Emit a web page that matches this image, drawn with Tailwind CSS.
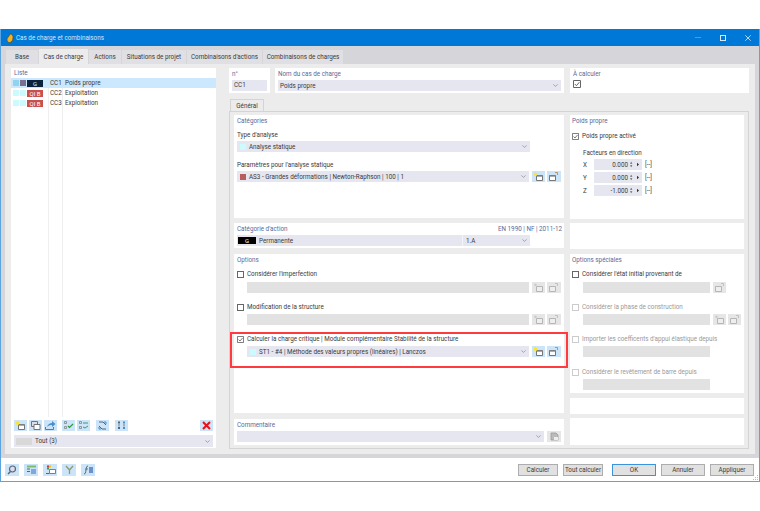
<!DOCTYPE html>
<html lang="fr">
<head>
    <meta charset="UTF-8">
    <title>Cas de charge et combinaisons</title>
    <script src="https://cdn.jsdelivr.net/npm/@tailwindcss/browser@4"></script>
</head>
<body class="bg-white pt-[29px] h-[511px] w-[760px] overflow-hidden font-['Roboto',sans-serif] text-[6.3px] leading-[10px] text-[#3a3a3a] whitespace-nowrap">
    <svg class="hidden">
        <symbol id="i-new" viewBox="0 0 13 11">
            <path d="M4.500 4.500h6v5h-6z" fill="#fff" stroke="#666" stroke-width=".9"/>
            <path d="M4.500 4.500h6v1.200h-6z" fill="#888"/>
            <path d="M3.500 0.300l.8 1.600 1.700.2-1.300 1.100.4 1.700-1.600-.9-1.600.9.400-1.700-1.300-1.100 1.700-.2z" fill="#f7e52e"/>
        </symbol>
        <symbol id="i-edit" viewBox="0 0 13 11">
            <path d="M2.500 4.500h6v5h-6z" fill="#fff" stroke="#666" stroke-width=".9"/>
            <path d="M2.500 4.500h6v1.200h-6z" fill="#888"/>
            <path d="M8 1.500h2.500V4" fill="none" stroke="#c09060" stroke-width="1"/>
        </symbol>
        <symbol id="i-new-off" viewBox="0 0 13 11">
            <path d="M4.500 4.500h6v5h-6z" fill="#eee" stroke="#b0b0b0" stroke-width=".9"/>
            <path d="M3.500 1l.5 1.200 1.300.1-1 .9.300 1.300-1.100-.7-1.100.7.300-1.300-1-.9 1.300-.1z" fill="#c8c8c8"/>
        </symbol>
        <symbol id="i-edit-off" viewBox="0 0 13 11">
            <path d="M2.500 4.500h6v5h-6z" fill="#eee" stroke="#b0b0b0" stroke-width=".9"/>
            <path d="M8 1.500h2.500V4" fill="none" stroke="#c0c0c0" stroke-width="1"/>
        </symbol>
        <symbol id="i-chev" viewBox="0 0 7 4">
            <path d="M.5.500l3 2.700 3-2.700" fill="none" stroke="#777" stroke-width=".8"/>
        </symbol>
        <symbol id="i-check" viewBox="0 0 8 8">
            <path d="M.5.500h7v7h-7z" fill="#fff" stroke="#666" stroke-width="1"/>
            <path d="M1.800 4l1.600 1.700 3-3.500" fill="none" stroke="#555" stroke-width=".9"/>
        </symbol>
        <symbol id="i-spin" viewBox="0 0 10 7">
            <path d="M0 2.800l1.200-2 1.200 2zM0 4.200l1.200 2 1.200-2z" fill="#666"/>
            <path d="M7 1.800l2 1.700-2 1.700z" fill="#333"/>
        </symbol>
    </svg>

    <div class="w-[760px] h-[453px] flex flex-col border-x border-b border-[#5aa5e0] bg-white">
        <!-- title bar -->
        <div class="h-[17px] shrink-0 bg-[#0078d7] flex items-center text-[#d5e8f8] pl-[5px]">
            <svg class="w-[8px] h-[10px]" viewBox="0 0 8 10">
                <path d="M4 1a3 3 0 0 1 3 3.500C7 7.500 5.500 9.500 3.500 9.500S1 8 1 6.500 2.500 4 3 3z" fill="#f0b429" stroke="#5b4a1a" stroke-width=".7"/>
            </svg>
            <span class="ml-[2px]">Cas de charge et combinaisons</span>
            <div class="ml-auto flex items-center gap-[19px] pr-[8px]">
                <div class="w-[6px] h-px bg-[#4a9ee0]"></div>
                <div class="w-[6px] h-[6px] border border-[#d5e8f8]"></div>
                <svg class="w-[6px] h-[6px]" viewBox="0 0 6 6"><path d="M.3.300l5.400 5.400M5.700.300L.3 5.700" stroke="#e5f0fa" stroke-width=".8"/></svg>
            </div>
        </div>

        <!-- dialog body -->
        <div class="h-[412px] shrink-0 bg-[#d6d6da] px-[4px] pb-[4px] flex flex-col">
            <!-- tabs -->
            <div class="h-[18px] shrink-0 flex items-end gap-px pl-px">
                <div class="w-[32px] h-[14px] bg-[#e0e0e4] flex items-center justify-center">Base</div>
                <div class="w-[49px] h-[15px] bg-[#ececec] flex items-center justify-center">Cas de charge</div>
                <div class="w-[32px] h-[14px] bg-[#e0e0e4] flex items-center justify-center">Actions</div>
                <div class="w-[64px] h-[14px] bg-[#e0e0e4] flex items-center justify-center">Situations de projet</div>
                <div class="w-[75px] h-[14px] bg-[#e0e0e4] flex items-center justify-center">Combinaisons d'actions</div>
                <div class="w-[80px] h-[14px] bg-[#e0e0e4] flex items-center justify-center">Combinaisons de charges</div>
            </div>

            <div class="flex-1 bg-[#ececec] flex pl-[6px] pt-[4px]">
                <!-- left list -->
                <div class="w-[205px] h-[380px] bg-white flex flex-col">
                    <div class="h-[10px] pl-[3px] text-[#5a6a9a]">Liste</div>
                    <div class="h-[339px] relative">
                        <div class="absolute left-[37px] top-0 bottom-0 w-px bg-[#efefef]"></div>
                        <div class="absolute left-[51px] top-0 bottom-0 w-px bg-[#efefef]"></div>
                        <div class="h-[10px] bg-[#cce8ff] flex items-center relative">
                            <div class="w-[6px] h-[6px] ml-[2px] bg-[#90d5f0]"></div>
                            <div class="w-[6px] h-[6px] ml-px bg-[#7a6f92]"></div>
                            <div class="w-[16px] h-[7px] ml-px bg-[#0c2340] text-[#cfe] text-[6px] leading-[7px] text-center">G</div>
                            <span class="ml-[7px] w-[15px]">CC1</span><span>Poids propre</span>
                        </div>
                        <div class="h-[10px] flex items-center relative">
                            <div class="w-[6px] h-[6px] ml-[2px] bg-[#ccfbff]"></div>
                            <div class="w-[6px] h-[6px] ml-px bg-[#ccfbff]"></div>
                            <div class="w-[16px] h-[7px] ml-px bg-[#c8504e] text-white text-[6px] leading-[7px] text-center">QI B</div>
                            <span class="ml-[7px] w-[15px]">CC2</span><span>Exploitation</span>
                        </div>
                        <div class="h-[10px] flex items-center relative">
                            <div class="w-[6px] h-[6px] ml-[2px] bg-[#ccfbff]"></div>
                            <div class="w-[6px] h-[6px] ml-px bg-[#ccfbff]"></div>
                            <div class="w-[16px] h-[7px] ml-px bg-[#c8504e] text-white text-[6px] leading-[7px] text-center">QI B</div>
                            <span class="ml-[7px] w-[15px]">CC3</span><span>Exploitation</span>
                        </div>
                    </div>
                    <!-- list toolbar -->
                    <div class="h-[11px] mt-[3px] ml-[3px] mr-[3px] flex">
                        <div class="w-[13px] h-[11px] bg-[#cce4f7]"><svg class="w-[13px] h-[11px]"><use href="#i-new"/></svg></div>
                        <div class="w-[13px] h-[11px] ml-[2px] bg-[#cce4f7]">
                            <svg class="w-[13px] h-[11px]" viewBox="0 0 13 11"><path d="M2.500 1.500h6v5h-6z" fill="#dde" stroke="#666" stroke-width=".9"/><path d="M5 4.500h6v5H5z" fill="#fff" stroke="#666" stroke-width=".9"/></svg>
                        </div>
                        <div class="w-[13px] h-[11px] ml-[2px] bg-[#cce4f7]">
                            <svg class="w-[13px] h-[11px]" viewBox="0 0 13 11"><path d="M1.500 7v2.500h8V7" fill="none" stroke="#678"/><path d="M3 7c1-3 3-4 5-4V1l3.500 3L8 7V5C6 5 4.500 5.500 3 7z" fill="#4a8fcc"/></svg>
                        </div>
                        <div class="w-[13px] h-[11px] ml-[5px] bg-[#cce4f7]">
                            <svg class="w-[13px] h-[11px]" viewBox="0 0 13 11"><path d="M2.500 1.500h2v2h-2zM2.500 6.500h2v2h-2z" fill="none" stroke="#777" stroke-width=".7"/><path d="M6 6l1.500 1.500L11 4" fill="none" stroke="#2a9a3a" stroke-width="1.200"/></svg>
                        </div>
                        <div class="w-[13px] h-[11px] ml-[2px] bg-[#cce4f7]">
                            <svg class="w-[13px] h-[11px]" viewBox="0 0 13 11"><path d="M2.500 1.500h2v2h-2zM2.500 6.500h2v2h-2z" fill="none" stroke="#777" stroke-width=".7"/><path d="M6 3h5M6 7l2 1 3-2" fill="none" stroke="#3a9a7a" stroke-width="1"/></svg>
                        </div>
                        <div class="w-[13px] h-[11px] ml-[6px] bg-[#cce4f7]">
                            <svg class="w-[13px] h-[11px]" viewBox="0 0 13 11"><path d="M3 2h4l3 3M10 9H6L3 6" fill="none" stroke="#567" stroke-width="1"/><path d="M9 1v2h2M4 10V8H2" fill="none" stroke="#4a8fcc" stroke-width="1"/></svg>
                        </div>
                        <div class="w-[13px] h-[11px] ml-[6px] bg-[#cce4f7]">
                            <svg class="w-[13px] h-[11px]" viewBox="0 0 13 11"><path d="M3 1.500h2v2H3zM3 7h2v2H3z" fill="#567"/><path d="M8 1.500h2v2H8zM8 7h2v2H8z" fill="#4a8fcc"/><path d="M4 4v2.500M9 4v2.500" stroke="#567" stroke-width=".8"/></svg>
                        </div>
                        <div class="w-[13px] h-[11px] ml-auto bg-[#cce4f7]">
                            <svg class="w-[13px] h-[11px]" viewBox="0 0 13 11"><path d="M3 2l7 7M10 2l-7 7" stroke="#e8101a" stroke-width="2"/></svg>
                        </div>
                    </div>
                    <div class="h-[12px] mt-[4px] mx-[3px] bg-[#e6e6f0] flex items-center pl-[2px] pr-[2px]">
                        <div class="w-[16px] h-[7px] bg-[#d8d8d8]"></div>
                        <span class="ml-[3px]">Tout (3)</span>
                        <svg class="w-[5px] h-[3px] ml-auto mr-[1px]"><use href="#i-chev"/></svg>
                    </div>
                </div>

                <!-- right side -->
                <div class="ml-[13px] w-[520px] flex flex-col">
                    <div class="flex h-[25px]">
                        <div class="w-[41px] bg-white pl-[3px] pr-[3px] text-[#5a6a9a]">
                            <div class="h-[12px] pt-px">n°</div>
                            <div class="h-[11px] bg-[#e6e6f0] pl-[2px] text-[#3a3a3a]">CC1</div>
                        </div>
                        <div class="w-[289px] ml-[5px] bg-white px-[3px] text-[#5a6a9a]">
                            <div class="h-[12px] pt-px">Nom du cas de charge</div>
                            <div class="h-[11px] bg-[#e6e6f0] pl-[2px] text-[#3a3a3a] flex items-center">Poids propre<svg class="w-[5px] h-[3px] ml-auto mr-[3px]"><use href="#i-chev"/></svg></div>
                        </div>
                        <div class="w-[179px] ml-[6px] bg-white px-[3px] text-[#5a6a9a]">
                            <div class="h-[12px] pt-px">À calculer</div>
                            <svg class="w-[8px] h-[8px]"><use href="#i-check"/></svg>
                        </div>
                    </div>

                    <!-- Général tab -->
                    <div class="h-[12px] mt-[6px] flex">
                        <div class="w-[34px] h-[12px] bg-[#ececec] border-x border-t border-[#d4d4d4] ml-px flex items-center justify-center">Général</div>
                    </div>
                    <div class="w-[520px] h-[338px] border border-[#d4d4d4] pl-[4px] pt-[3px] flex gap-[6px]">
                        <!-- middle column -->
                        <div class="w-[330px] flex flex-col">
                            <div class="h-[103px] bg-white px-[3px] pt-px">
                                <div class="h-[10px] text-[#5a6a9a]">Catégories</div>
                                <div class="h-[10px] mt-[4px]">Type d'analyse</div>
                                <div class="w-[293px] h-[11px] mt-px bg-[#e6e6f0] flex items-center pl-[3px]">
                                    <div class="w-[6px] h-[6px] bg-[#ccfbff]"></div><span class="ml-[3px]">Analyse statique</span>
                                    <svg class="w-[5px] h-[3px] ml-auto mr-[3px]"><use href="#i-chev"/></svg>
                                </div>
                                <div class="h-[10px] mt-[8px]">Paramètres pour l'analyse statique</div>
                                <div class="flex h-[11px] mt-px">
                                    <div class="w-[293px] bg-[#e6e6f0] flex items-center pl-[3px]">
                                        <div class="w-[6px] h-[6px] bg-[#b85c5c]"></div><span class="ml-[3px]">AS3 - Grandes déformations | Newton-Raphson | 100 | 1</span>
                                        <svg class="w-[5px] h-[3px] ml-auto mr-[3px]"><use href="#i-chev"/></svg>
                                    </div>
                                    <div class="w-[13px] ml-[3px] bg-[#cce4f7]"><svg class="w-[13px] h-[11px]"><use href="#i-new"/></svg></div>
                                    <div class="w-[14px] ml-[2px] bg-[#cce4f7]"><svg class="w-[13px] h-[11px]"><use href="#i-edit"/></svg></div>
                                </div>
                            </div>
                            <div class="h-[25px] mt-[5px] bg-white px-[3px] pt-px">
                                <div class="h-[10px] flex justify-between text-[#5a6a9a]"><span>Catégorie d'action</span><span class="mr-[-1px]">EN 1990 | NF | 2011-12</span></div>
                                <div class="w-[293px] h-[11px] mt-px bg-[#e6e6f0] flex items-center pl-px">
                                    <div class="w-[18px] h-[7px] bg-black text-white text-[6px] leading-[7px] text-center">G</div>
                                    <span class="ml-[3px] w-[203px]">Permanente</span>
                                    <div class="w-px h-[11px] bg-[#f4f4f8]"></div>
                                    <span class="ml-[3px]">1.A</span>
                                    <svg class="w-[5px] h-[3px] ml-auto mr-[3px]"><use href="#i-chev"/></svg>
                                </div>
                            </div>
                            <div class="h-[159px] mt-[6px] bg-white px-[3px] pt-px">
                                <div class="h-[10px] text-[#5a6a9a]">Options</div>
                                <div class="flex items-center h-[10px] mt-[4px]">
                                    <div class="w-[7px] h-[7px] border border-[#666]"></div><span class="ml-[3px]">Considérer l'imperfection</span>
                                </div>
                                <div class="flex h-[11px] mt-[3px] ml-[10px]">
                                    <div class="w-[283px] bg-[#e2e2e2]"></div>
                                    <div class="w-[13px] ml-[3px] bg-[#e6e6e6]"><svg class="w-[13px] h-[11px]"><use href="#i-new-off"/></svg></div>
                                    <div class="w-[14px] ml-[2px] bg-[#e6e6e6]"><svg class="w-[13px] h-[11px]"><use href="#i-edit-off"/></svg></div>
                                </div>
                                <div class="flex items-center h-[10px] mt-[9px]">
                                    <div class="w-[7px] h-[7px] border border-[#666]"></div><span class="ml-[3px]">Modification de la structure</span>
                                </div>
                                <div class="flex h-[11px] mt-[2px] ml-[10px]">
                                    <div class="w-[283px] bg-[#e2e2e2]"></div>
                                    <div class="w-[13px] ml-[3px] bg-[#e6e6e6]"><svg class="w-[13px] h-[11px]"><use href="#i-new-off"/></svg></div>
                                    <div class="w-[14px] ml-[2px] bg-[#e6e6e6]"><svg class="w-[13px] h-[11px]"><use href="#i-edit-off"/></svg></div>
                                </div>
                                <div class="flex items-center h-[10px] mt-[9px]">
                                    <svg class="w-[7px] h-[7px]"><use href="#i-check"/></svg><span class="ml-[3px]">Calculer la charge critique | Module complémentaire Stabilité de la structure</span>
                                </div>
                                <div class="flex h-[11px] mt-[2px] ml-[10px]">
                                    <div class="w-[283px] bg-[#e6e6f0] flex items-center pl-[3px]">
                                        <div class="w-[6px] h-[6px] bg-[#ccfbff]"></div><span class="ml-[3px]">ST1 - #4 | Méthode des valeurs propres (linéaires) | Lanczos</span>
                                        <svg class="w-[5px] h-[3px] ml-auto mr-[3px]"><use href="#i-chev"/></svg>
                                    </div>
                                    <div class="w-[13px] ml-[3px] bg-[#cce4f7]"><svg class="w-[13px] h-[11px]"><use href="#i-new"/></svg></div>
                                    <div class="w-[14px] ml-[2px] bg-[#cce4f7]"><svg class="w-[13px] h-[11px]"><use href="#i-edit"/></svg></div>
                                </div>
                            </div>
                            <div class="h-[26px] mt-[6px] bg-white px-[3px] pt-px">
                                <div class="h-[10px] text-[#5a6a9a]">Commentaire</div>
                                <div class="flex h-[11px] mt-px">
                                    <div class="w-[308px] bg-[#e6e6f0] flex items-center">
                                        <svg class="w-[5px] h-[3px] ml-auto mr-[3px]"><use href="#i-chev"/></svg>
                                    </div>
                                    <div class="w-[14px] ml-[3px] bg-[#e6e6e6] flex items-center justify-center">
                                        <svg class="w-[9px] h-[9px]" viewBox="0 0 9 9"><path d="M1 1h5l2 2v5H1z" fill="#bbb" stroke="#999" stroke-width=".8"/><path d="M4 5h4v3H4z" fill="#eee"/></svg>
                                    </div>
                                </div>
                            </div>
                        </div>

                        <!-- right column -->
                        <div class="w-[174px] flex flex-col">
                            <div class="h-[104px] bg-white pl-[2px] pt-px">
                                <div class="h-[10px] text-[#5a6a9a]">Poids propre</div>
                                <div class="flex items-center h-[10px] mt-[5px]">
                                    <svg class="w-[7px] h-[7px]"><use href="#i-check"/></svg><span class="ml-[3px]">Poids propre activé</span>
                                </div>
                                <div class="h-[10px] mt-[7px] ml-[11px]">Facteurs en direction</div>
                                <div class="flex items-center h-[11px] mt-px ml-[11px]">
                                    <span class="w-[11px]">X</span>
                                    <div class="w-[48px] h-[11px] bg-[#e6e6f0] flex items-center justify-end pr-[2px]">0.000<svg class="w-[10px] h-[7px] ml-[2px]"><use href="#i-spin"/></svg></div>
                                    <span class="ml-[3px]">[--]</span>
                                </div>
                                <div class="flex items-center h-[11px] mt-[2px] ml-[11px]">
                                    <span class="w-[11px]">Y</span>
                                    <div class="w-[48px] h-[11px] bg-[#e6e6f0] flex items-center justify-end pr-[2px]">0.000<svg class="w-[10px] h-[7px] ml-[2px]"><use href="#i-spin"/></svg></div>
                                    <span class="ml-[3px]">[--]</span>
                                </div>
                                <div class="flex items-center h-[11px] mt-[2px] ml-[11px]">
                                    <span class="w-[11px]">Z</span>
                                    <div class="w-[48px] h-[11px] bg-[#e6e6f0] flex items-center justify-end pr-[2px]">-1.000<svg class="w-[10px] h-[7px] ml-[2px]"><use href="#i-spin"/></svg></div>
                                    <span class="ml-[3px]">[--]</span>
                                </div>
                            </div>
                            <div class="h-[26px] mt-[4px] bg-white"></div>
                            <div class="h-[139px] mt-[5px] bg-white pl-[2px] pt-px">
                                <div class="h-[10px] text-[#5a6a9a]">Options spéciales</div>
                                <div class="flex items-center h-[10px] mt-[4px]">
                                    <div class="w-[7px] h-[7px] border border-[#666]"></div><span class="ml-[3px]">Considérer l'état initial provenant de</span>
                                </div>
                                <div class="flex h-[11px] mt-[3px] ml-[11px]">
                                    <div class="w-[127px] bg-[#e2e2e2]"></div>
                                    <div class="w-[13px] ml-[3px] bg-[#e6e6e6]"><svg class="w-[13px] h-[11px]"><use href="#i-edit-off"/></svg></div>
                                </div>
                                <div class="flex items-center h-[10px] mt-[9px] text-[#999]">
                                    <div class="w-[7px] h-[7px] border border-[#ccc]"></div><span class="ml-[3px]">Considérer la phase de construction</span>
                                </div>
                                <div class="flex h-[11px] mt-[2px] ml-[11px]">
                                    <div class="w-[127px] bg-[#e2e2e2]"></div>
                                    <div class="w-[13px] ml-[3px] bg-[#e6e6e6]"><svg class="w-[13px] h-[11px]"><use href="#i-new-off"/></svg></div>
                                    <div class="w-[13px] ml-[2px] bg-[#e6e6e6]"><svg class="w-[13px] h-[11px]"><use href="#i-edit-off"/></svg></div>
                                </div>
                                <div class="flex items-center h-[10px] mt-[9px] text-[#999]">
                                    <div class="w-[7px] h-[7px] border border-[#ccc]"></div><span class="ml-[3px]">Importer les coefficents d'appui élastique depuis</span>
                                </div>
                                <div class="w-[127px] h-[11px] mt-[2px] ml-[11px] bg-[#e2e2e2]"></div>
                                <div class="flex items-center h-[10px] mt-[10px] text-[#999]">
                                    <div class="w-[7px] h-[7px] border border-[#ccc]"></div><span class="ml-[3px]">Considérer le revêtement de barre depuis</span>
                                </div>
                                <div class="w-[127px] h-[11px] mt-[2px] ml-[11px] bg-[#e2e2e2]"></div>
                            </div>
                            <div class="h-[16px] mt-[5px] bg-white"></div>
                            <div class="h-[27px] mt-[4px] bg-white"></div>
                        </div>
                    </div>
                </div>
            </div>
        </div>

        <!-- footer -->
        <div class="flex-1 flex items-center pl-[4px] relative">
            <div class="w-[14px] h-[12px] bg-[#cce4f7] flex items-center justify-center">
                <svg class="w-[10px] h-[10px]" viewBox="0 0 10 10"><circle cx="5.500" cy="4" r="3" fill="#dde" stroke="#567" stroke-width="1.200"/><path d="M3.500 6.500L1 9" stroke="#567" stroke-width="1.500"/></svg>
            </div>
            <div class="w-[14px] h-[12px] ml-[5px] bg-[#cce4f7] flex items-center justify-center">
                <svg class="w-[11px] h-[10px]" viewBox="0 0 11 10"><path d="M1 .5h9v2H1z" fill="#7cbf6a"/><path d="M5 4h5v5H5z" fill="#7fa8e0"/><path d="M1 4h3M1 6.500h3" stroke="#567"/></svg>
            </div>
            <div class="w-[14px] h-[12px] ml-[5px] bg-[#cce4f7] flex items-center justify-center">
                <svg class="w-[11px] h-[10px]" viewBox="0 0 11 10"><path d="M2 .5h2v2H2z" fill="#d8342a"/><path d="M4 .5h2v2H4z" fill="#f0c020"/><path d="M2 2.500h2v2H2z" fill="#3a9a4a"/><path d="M4.500 4.500h6v4h-6z" fill="#fff" stroke="#567" stroke-width=".8"/><path d="M1 8.500h3" stroke="#567"/></svg>
            </div>
            <div class="w-[14px] h-[12px] ml-[5px] bg-[#cce4f7] flex items-center justify-center">
                <svg class="w-[9px] h-[10px]" viewBox="0 0 9 10"><path d="M1 1l3.500 4L8 1M4.500 5v4" fill="none" stroke="#8a9a70" stroke-width="1.300"/></svg>
            </div>
            <div class="w-[14px] h-[12px] ml-[5px] bg-[#cce4f7] flex items-center justify-center">
                <svg class="w-[11px] h-[10px]" viewBox="0 0 11 10"><path d="M5 1C3.500 1 3.500 2.500 3 5S2.500 9 1 9" fill="none" stroke="#567" stroke-width="1"/><path d="M2 4h3" stroke="#567" stroke-width=".8"/><path d="M6 2h4v6H6z" fill="#6a92c8"/></svg>
            </div>
            <div class="ml-auto flex items-center pr-[5px]">
                <div class="w-[40px] h-[12px] bg-[#e1e1e1] border border-[#adadad] flex items-center justify-center">Calculer</div>
                <div class="w-[40px] h-[12px] ml-[5px] bg-[#e1e1e1] border border-[#adadad] flex items-center justify-center">Tout calculer</div>
                <div class="w-[44px] h-[12px] ml-[9px] bg-[#e1e1e1] border border-[#3a94dc] flex items-center justify-center">OK</div>
                <div class="w-[44px] h-[12px] ml-[5px] bg-[#e1e1e1] border border-[#adadad] flex items-center justify-center">Annuler</div>
                <div class="w-[44px] h-[12px] ml-[5px] bg-[#e1e1e1] border border-[#adadad] flex items-center justify-center">Appliquer</div>
            </div>
            <svg class="absolute right-px bottom-px w-[5px] h-[5px]" viewBox="0 0 5 5"><path d="M4 0h1v1H4zM2 2h1v1H2zM4 2h1v1H4zM0 4h1v1H0zM2 4h1v1H2zM4 4h1v1H4z" fill="#bbb"/></svg>
        </div>
    </div>

    <!-- highlight frame over the critical load option -->
    <div class="absolute left-[230px] top-[332px] w-[338px] h-[36px] border-[2.5px] border-[#ff3b3f]"></div>
</body>
</html>
